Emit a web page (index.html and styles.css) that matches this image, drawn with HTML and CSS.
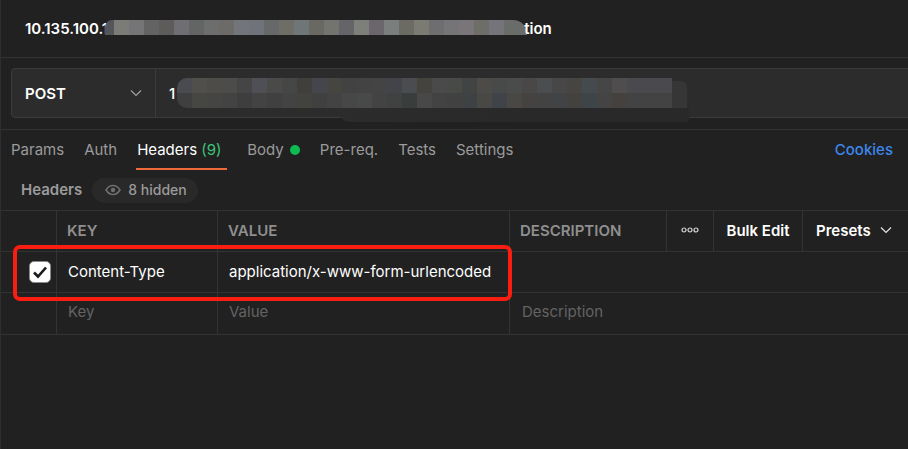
FILE: index.html
```html
<!DOCTYPE html>
<html lang="en">
<head>
<meta charset="utf-8">
<title>Request headers</title>
<link rel="stylesheet" href="styles.css">
</head>
<body>
<div class="app">
  <header class="titlebar">
    <span class="title-text">10.135.100.1</span>
    <span class="mosaic mosaic-title"></span>
    <span class="title-text title-end">tion</span>
  </header>
  <section class="request">
    <div class="urlbar">
      <div class="method">
        <span>POST</span>
        <svg class="chevron" width="12" height="12" viewBox="0 0 12 12"><path d="M1 3.5 6 8.5 11 3.5"/></svg>
      </div>
      <div class="url">
        <span class="url-text">1</span>
        <span class="mosaic mosaic-url"></span>
      </div>
    </div>
  </section>
  <nav class="tabs">
    <a class="tab">Params</a>
    <a class="tab">Auth</a>
    <a class="tab active">Headers <span class="count">(9)</span></a>
    <a class="tab">Body <i class="dot"></i></a>
    <a class="tab">Pre-req.</a>
    <a class="tab">Tests</a>
    <a class="tab">Settings</a>
    <a class="cookies">Cookies</a>
  </nav>
  <div class="subhead">
    <span class="subhead-label">Headers</span>
    <span class="pill">
      <svg width="16" height="12" viewBox="0 0 16 12"><path class="eye" d="M1 6C3 2.8 5.3 1.5 8 1.5S13 2.8 15 6C13 9.2 10.700 10.500 8 10.500S3 9.200 1 6Z"/><circle class="pupil" cx="8" cy="6" r="2.200"/></svg>
      8 hidden
    </span>
  </div>
  <div class="table">
    <div class="cell head"></div>
    <div class="cell head">KEY</div>
    <div class="cell head">VALUE</div>
    <div class="cell head">DESCRIPTION</div>
    <div class="cell head action"><svg width="18" height="6" viewBox="0 0 18 6"><circle cx="3" cy="3" r="2"/><circle cx="9" cy="3" r="2"/><circle cx="15" cy="3" r="2"/></svg></div>
    <div class="cell head action strong">Bulk Edit</div>
    <div class="cell head last strong">Presets
      <svg class="chevron light" width="12" height="12" viewBox="0 0 12 12"><path d="M1 3.500 6 8.500 11 3.500"/></svg>
    </div>

    <div class="cell check"><span class="checkbox"><svg width="16" height="14" viewBox="0 0 16 14"><path d="M2 7.500 6 11.500 14 2.500"/></svg></span></div>
    <div class="cell value">Content-Type</div>
    <div class="cell value">application/x-www-form-urlencoded</div>
    <div class="cell wide"></div>

    <div class="cell ghost-row"></div>
    <div class="cell ghost-row placeholder">Key</div>
    <div class="cell ghost-row placeholder">Value</div>
    <div class="cell ghost-row placeholder wide">Description</div>
    <div class="highlight"></div>
  </div>
</div>
</body>
</html>
```
FILE: styles.css
```css
* { box-sizing: border-box; }
html, body { margin: 0; height: 100%; overflow: hidden; }
body { background: #212121; font-family: Inter, "Liberation Sans", sans-serif; font-size: 15px; color: #fff; }
.app { width: 908px; height: 449px; border-left: 1px solid #2e2e2e; overflow: hidden; }

.titlebar { height: 58px; padding: 0 0 0 24px; display: flex; align-items: center; border-bottom: 1px solid #333; }
.title-text { font-weight: 600; line-height: 20px; white-space: nowrap; }
.title-end { margin-left: -3px; }

.mosaic { display: block; flex: none; background-repeat: no-repeat; }
.mosaic-title {
  width: 422px; height: 15px; margin: -2px 0 0 -3px; border-radius: 7px 14px 0 0;
  background-image: linear-gradient(90deg,
    #55565c 0 9px, #7b7b78 9px 24px, #757577 24px 39px, #636363 39px 54px, #5e5c5b 54px 69px,
    #6f6e72 69px 84px, #636464 84px 99px, #6b6e6c 99px 114px, #6c6b68 114px 129px, #72757a 129px 144px,
    #71737a 144px 159px, #666869 159px 174px, #6e6e66 174px 189px, #6f7678 189px 204px, #6a6862 204px 219px,
    #737370 219px 234px, #656569 234px 249px, #7d7f7a 249px 264px, #6b666b 264px 279px, #7a7e7c 279px 294px,
    #6b6b64 294px 309px, #7b7a73 309px 324px, #6e6d70 324px 339px, #757477 339px 354px, #7a7578 354px 369px,
    #6e6e69 369px 384px, #74747a 384px 399px, #6a6c69 399px 422px);
}

.request { height: 72px; padding: 10px 0 0 10px; border-bottom: 1px solid #333; }
.urlbar { width: 920px; height: 50px; display: flex; background: #2c2c2c; border: 1px solid #3b3b3b; border-radius: 4px; }
.method { width: 144px; flex: none; padding: 0 13px; display: flex; align-items: center; justify-content: space-between; font-weight: 600; border-right: 1px solid #3b3b3b; }
.url { flex: 1; display: flex; align-items: center; padding-left: 13px; font-weight: 500; position: relative; }
.url-text { width: 8px; }
.mosaic-url {
  position: relative; width: 495px; height: 30px; border-radius: 10px 0 0 10px;
  background-image:
    linear-gradient(90deg,
      #4a4b50 0 15px, #504f4c 15px 30px, #4d4c49 30px 45px, #4c4c4a 45px 60px, #454545 60px 75px, #4f5055 75px 90px,
      #4a4b48 90px 105px, #454646 105px 120px, #403f3b 120px 135px, #45464b 135px 150px, #47453f 150px 165px,
      #424242 165px 180px, #434343 180px 195px, #444444 195px 210px, #43444a 210px 225px, #4b4c50 225px 240px,
      #45433d 240px 255px, #4a4a4a 255px 270px, #484a47 270px 285px, #424444 285px 300px, #4d4b47 300px 315px,
      #474a48 315px 330px, #4a4c4c 330px 345px, #4a4846 345px 360px, #4a4e50 360px 375px, #474747 375px 390px,
      #464542 390px 405px, #444a4e 405px 420px, #464646 420px 435px, #504d4e 435px 450px, #4a4a4e 450px 495px),
    linear-gradient(90deg,
      #3f3f40 0 15px, #464643 15px 30px, #454543 30px 45px, #434343 45px 60px, #3e3e3e 60px 75px, #434343 75px 90px,
      #404040 90px 105px, #434343 105px 120px, #42423e 120px 135px, #404040 135px 150px, #434343 150px 165px,
      #474747 165px 180px, #474a48 180px 195px, #434343 195px 210px, #404242 210px 225px, #393d3c 225px 240px,
      #484848 240px 255px, #434343 255px 270px, #414141 270px 285px, #3f4244 285px 300px, #4a4844 300px 315px,
      #404448 315px 330px, #494845 330px 345px, #444341 345px 360px, #434343 360px 375px, #414345 375px 390px,
      #44423f 390px 405px, #3d4549 405px 420px, #444444 420px 435px, #45413f 435px 450px, #434343 450px 495px);
  background-size: 100% 15px, 100% 15px;
  background-position: 0 0, 0 15px;
}
.mosaic-url::after {
  content: ""; position: absolute; left: 495px; top: 3px; width: 15px; height: 27px;
  background: #363636; border-radius: 0 6px 0 0;
}
.mosaic-url::before {
  content: ""; position: absolute; left: 160px; top: 30px; width: 352px; height: 14px;
  background: linear-gradient(90deg, #2c2c2c, #292929 50%); border-radius: 0 0 12px 60px;
}

.tabs { height: 40px; display: flex; align-items: center; padding-left: 10px; padding-right: 15px; color: #9b9b9b; }
.tab { height: 100%; display: flex; align-items: center; margin-right: 20px; white-space: pre; border-bottom: 2px solid transparent; padding-top: 1px; }
.tab.active { color: #fff; margin-left: -1px; padding: 1px 0 0 1px; width: 91px; border-bottom-color: #f0693a; margin-right: 20px; }
.count { color: #3ec47a; }
.dot { width: 10px; height: 10px; border-radius: 50%; background: #0cbb52; margin-left: 2px; }
.cookies { margin-left: auto; margin-bottom: 1px; color: #3b87ee; font-weight: 500; }

.subhead { height: 40px; display: flex; align-items: center; padding: 0 0 1px 20px; gap: 10px; font-weight: 500; color: #9b9b9b; }
.subhead-label { font-weight: 600; }
.pill { height: 25px; width: 106px; margin-top: 1px; display: flex; align-items: center; gap: 7px; padding: 0 0 1px 13px; background: #292929; border-radius: 13px; font-size: 14px; }
.eye { fill: none; stroke: #6f6f6f; stroke-width: 1.500; }
.pupil { fill: #6f6f6f; }

.table { position: relative; display: grid; grid-template-columns: 56px 161px 292px 157px 47px 89px 105px; grid-template-rows: 41px 41px 42px; border-top: 1px solid #333; width: 908px; }
.cell { display: flex; align-items: center; padding: 0 11px 2px; border-right: 1px solid #333; border-bottom: 1px solid #333; white-space: nowrap; }
.head { font-weight: 600; color: #8f8f8f; padding: 0 10px 2px; }
.action { justify-content: center; padding: 0 0 2px; }
.action svg circle { fill: none; stroke: #d8d8d8; stroke-width: 1.200; }
.strong { color: #fff; font-weight: 600; }
.last { border-right: 0; padding: 0 13px 2px; gap: 9px; }
.wide { grid-column: 4 / -1; border-right: 0; }
.check { justify-content: flex-start; padding: 0 0 0 28px; }
.checkbox { width: 22px; height: 22px; background: #fff; border: 1px solid #8a8a8a; border-radius: 5px; display: flex; align-items: center; justify-content: center; }
.checkbox path { fill: none; stroke: #1a1a1a; stroke-width: 2.600; }
.value { color: #fff; }
.ghost-row { padding-bottom: 4px; }
.placeholder { color: #636363; }
.placeholder.wide { padding-left: 12px; }
.chevron { flex: none; }
.chevron path { fill: none; stroke: #a0a0a0; stroke-width: 1.200; }
.chevron.light path { stroke: #e6e6e6; }
.highlight { position: absolute; left: 12px; top: 34px; width: 499px; height: 56px; border: 4px solid #fa1e12; border-radius: 7px; pointer-events: none; }
```
